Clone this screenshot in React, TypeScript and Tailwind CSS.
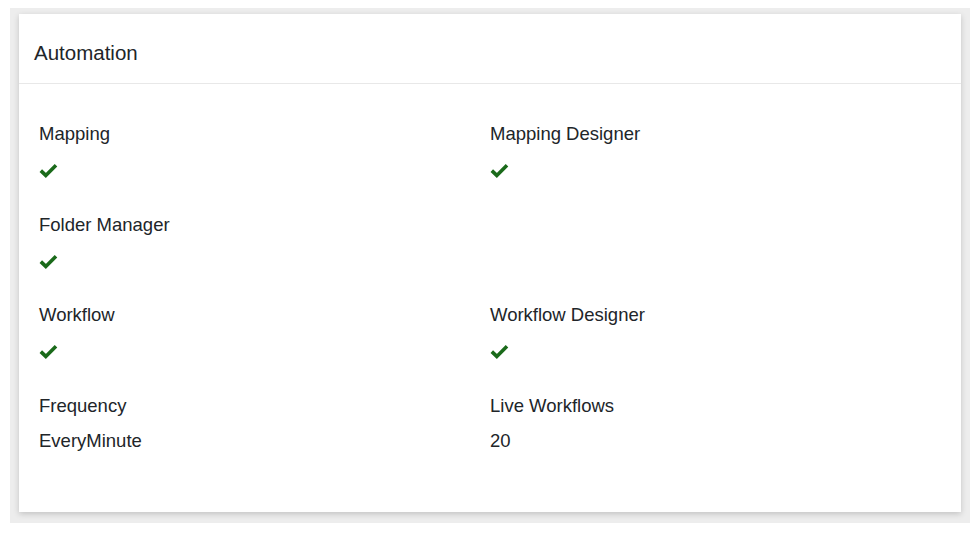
const items: { label: string; value?: string }[][] = [
  [{ label: 'Mapping' }, { label: 'Mapping Designer' }],
  [{ label: 'Folder Manager' }],
  [{ label: 'Workflow' }, { label: 'Workflow Designer' }],
  [
    { label: 'Frequency', value: 'EveryMinute' },
    { label: 'Live Workflows', value: '20' },
  ],
];

const Check = () => (
  <svg width="19" height="15" viewBox="0 0 19 15" className="block">
    <path d="M1.8 7.6 L6.8 12.4 L17 2.2" fill="none" stroke="#1a6a1a" strokeWidth="3.6" />
  </svg>
);

export default function App() {
  return (
    <div className="w-[980px] h-[535px] bg-white pt-2 px-[10px] font-['Liberation_Sans',Arial,sans-serif] text-[#212529]">
      <div className="h-[515px] bg-[#ededed] pt-[6px] px-[9px] pb-[11px]">
        <div className="h-full bg-white shadow-[0_2px_6px_rgba(0,0,0,0.18)] flex flex-col">
          <div className="h-[70px] px-[15px] pt-[9px] flex items-center border-b border-[#e8e8e8]">
            <h2 className="text-[20.5px] leading-none">Automation</h2>
          </div>
          <div className="px-5 pt-[36px]">
            {items.map((row, i) => (
              <div key={i} className="grid grid-cols-2 mb-[26.5px]">
                {row.map((it) => (
                  <div key={it.label}>
                    <div className="text-[18.5px] leading-[27px]">{it.label}</div>
                    {it.value ? (
                      <div className="mt-[8px] text-[18.5px] leading-[27px]">{it.value}</div>
                    ) : (
                      <div className="mt-[10px] h-[27px] flex items-center">
                        <Check />
                      </div>
                    )}
                  </div>
                ))}
              </div>
            ))}
          </div>
        </div>
      </div>
    </div>
  );
}
